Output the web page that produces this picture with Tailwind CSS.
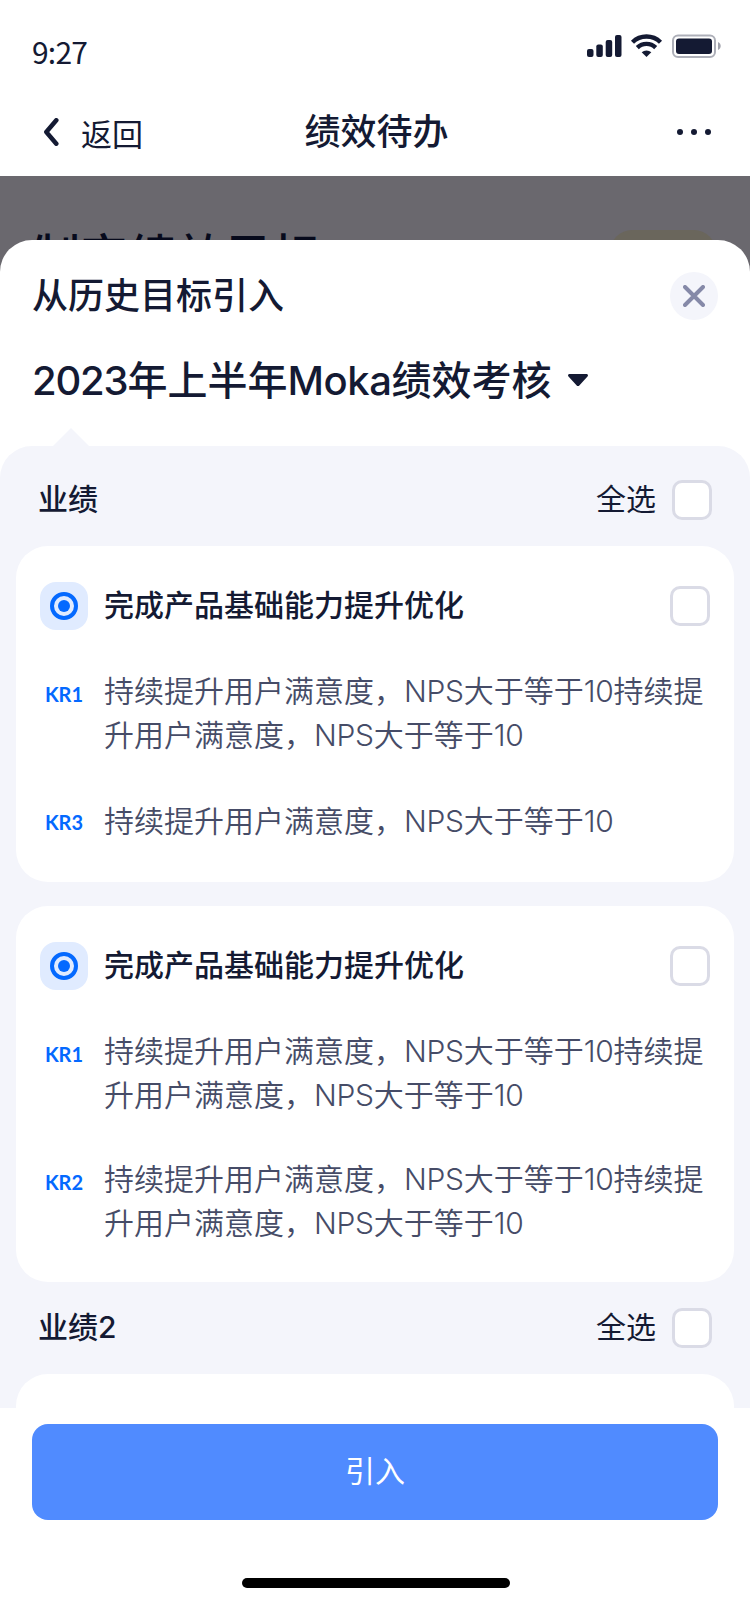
<!DOCTYPE html>
<html lang="zh-CN">
<head>
  <meta charset="UTF-8">
  <meta name="viewport" content="width=device-width, initial-scale=1.0">
  <title>绩效待办</title>
  <script src="https://cdn.jsdelivr.net/npm/@tailwindcss/browser@4"></script>
</head>
<body class="bg-white">
<div class="w-[750px] h-[1604px] overflow-hidden flex flex-col bg-white text-[#141a33] font-['Noto_Sans_CJK_SC',sans-serif]">
  <!-- Status bar -->
  <header class="h-[176px] shrink-0">
    <div class="h-[88px] flex justify-between pl-8 pr-[29px]">
      <span class="text-[30px] leading-[44px] pt-[29px] tracking-[-0.8px]">9:27</span>
      <svg class="w-[134px] h-6 mt-[34px]" viewBox="0 0 134 24" fill="none">
        <rect x="0" y="15" width="6.5" height="8" rx="2" fill="#141a33"/>
        <rect x="9.3" y="10.5" width="6.5" height="12.5" rx="2" fill="#141a33"/>
        <rect x="18.7" y="6" width="6.5" height="17" rx="2" fill="#141a33"/>
        <rect x="28" y="1" width="6.5" height="22" rx="2" fill="#141a33"/>
        <path d="M45.5 8.200a20 20 0 0 1 28 0M50.300 13.600a13.200 13.200 0 0 1 18.400 0" stroke="#141a33" stroke-width="4.400"/>
        <path d="M54.700 18.300a7 7 0 0 1 9.600 0L59.500 23z" fill="#141a33"/>
        <rect x="86" y="1.500" width="42" height="21.500" rx="5" stroke="#141a33" stroke-opacity=".35" stroke-width="2"/>
        <rect x="89" y="4.500" width="36" height="15.500" rx="3" fill="#141a33"/>
        <path d="M131 8v8c1.600-.7 2.700-2.200 2.700-4s-1.100-3.300-2.700-4z" fill="#141a33" fill-opacity=".4"/>
      </svg>
    </div>
    <!-- Nav bar -->
    <div class="h-[88px] grid grid-cols-3 items-center pl-11 pr-[41px]">
      <div class="flex items-center gap-[22px]">
        <svg class="w-[15px] h-7" viewBox="0 0 15 28" fill="none" stroke="#141a33" stroke-width="4.500" stroke-linecap="round" stroke-linejoin="round"><path d="M12.300 2.300 2.300 14l10 11.700"/></svg>
        <span class="text-[31px] leading-[44px] pt-[2px]">返回</span>
      </div>
      <h1 class="text-center text-[36px] leading-[52px] pb-[6px] font-medium">绩效待办</h1>
      <svg class="w-[34px] h-[6px] justify-self-end -mr-[2px]" viewBox="0 0 34 6" fill="#141a33"><circle cx="3" cy="3" r="3"/><circle cx="17" cy="3" r="3"/><circle cx="31" cy="3" r="3"/></svg>
    </div>
  </header>

  <!-- Dimmed page behind the sheet -->
  <div class="relative h-[1428px] bg-[#6a686e]">
    <div class="flex justify-between pl-8 pr-[34px] pt-[41px]">
      <h2 class="text-[48px] leading-[72px] font-medium text-[#070a1c]">制定绩效目标</h2>
      <span class="w-[106px] h-11 mt-[13px] rounded-[22px] bg-[#6a665c]"></span>
    </div>

    <!-- Bottom sheet -->
    <section class="absolute inset-x-0 top-16 bottom-0 bg-white rounded-t-[32px] flex flex-col">
      <div class="flex items-center justify-between h-20 px-8 pt-8">
        <h2 class="text-[36px] leading-[48px] pb-[6px] font-medium">从历史目标引入</h2>
        <button class="size-12 rounded-full bg-[#f4f5fb] flex items-center justify-center">
          <svg class="size-[22px]" viewBox="0 0 22 22" stroke="#8589a8" stroke-width="4" stroke-linecap="round"><path d="M2 2l18 18M20 2 2 20"/></svg>
        </button>
      </div>
      <div class="flex items-center px-8 mt-8 h-14 gap-4">
        <h3 class="text-[40px] leading-[56px] pb-[5px] font-medium whitespace-nowrap"><span class="font-['Inter'] leading-none tracking-[-0.03em]">2023</span>年上半年<span class="font-['Inter'] leading-none tracking-[-0.01em]">Moka</span>绩效考核</h3>
        <svg class="w-5 h-3" viewBox="0 0 20 12" fill="#141a33"><path d="M1.500 0h17c1.300 0 2 1.500 1 2.500l-8.200 9a1.700 1.700 0 0 1-2.600 0L.5 2.500C-.5 1.500.2 0 1.500 0z"/></svg>
      </div>
      <svg class="w-[36px] h-[18px] ml-[53px] mt-[20px]" viewBox="0 0 36 18" fill="#f4f5fb"><path d="M0 18 18 0l18 18z"/></svg>

      <div class="h-[962px] shrink-0 overflow-hidden bg-[#f4f5fb] rounded-t-[32px]">
        <div class="h-[100px] flex items-center pt-[8px] px-[38px] gap-4">
          <h4 class="flex-1 text-[30px] leading-[44px] pb-[6px] font-medium">业绩</h4>
          <span class="text-[30px] leading-[44px] pb-[6px]">全选</span>
          <span class="size-10 rounded-[10px] border-3 border-[#dadbe6] bg-white"></span>
        </div>

        <div class="mx-4 h-[336px] rounded-[32px] bg-white px-6 pt-9">
          <div class="flex items-center h-12 gap-4">
            <span class="size-12 rounded-2xl bg-[#e0ebff] flex items-center justify-center">
              <svg class="size-7" viewBox="0 0 28 28" fill="none"><circle cx="14" cy="14" r="12" stroke="#0469ff" stroke-width="4"/><circle cx="14" cy="14" r="6" fill="#0469ff"/></svg>
            </span>
            <h5 class="flex-1 text-[30px] leading-[44px] pb-[6px] font-medium">完成产品基础能力提升优化</h5>
            <span class="size-10 rounded-[10px] border-3 border-[#dadbe6] bg-white"></span>
          </div>
          <div class="flex gap-4 mt-10 h-[88px] text-[30px] leading-[44px] font-[350] text-[#464c67]">
            <span class="w-12 text-center font-['Lato'] font-bold text-[20px] leading-[48px] text-[#0469ff]">KR1</span>
            <p class="-mt-[3px] whitespace-nowrap">持续提升用户满意度，<span class="font-['Inter'] font-light leading-none tracking-[-0.01em]">NPS</span>大于等于<span class="font-['Inter'] font-light leading-none tracking-[-0.01em]">10</span>持续提<br>升用户满意度，<span class="font-['Inter'] font-light leading-none tracking-[-0.01em]">NPS</span>大于等于<span class="font-['Inter'] font-light leading-none tracking-[-0.01em]">10</span></p>
          </div>
          <div class="flex gap-4 mt-10 h-12 text-[30px] leading-[44px] font-[350] text-[#464c67]">
            <span class="w-12 text-center font-['Lato'] font-bold text-[20px] leading-[48px] text-[#0469ff]">KR3</span>
            <p class="-mt-px whitespace-nowrap">持续提升用户满意度，<span class="font-['Inter'] font-light leading-none tracking-[-0.01em]">NPS</span>大于等于<span class="font-['Inter'] font-light leading-none tracking-[-0.01em]">10</span></p>
          </div>
        </div>

        <div class="mx-4 mt-6 h-[376px] rounded-[32px] bg-white px-6 pt-9">
          <div class="flex items-center h-12 gap-4">
            <span class="size-12 rounded-2xl bg-[#e0ebff] flex items-center justify-center">
              <svg class="size-7" viewBox="0 0 28 28" fill="none"><circle cx="14" cy="14" r="12" stroke="#0469ff" stroke-width="4"/><circle cx="14" cy="14" r="6" fill="#0469ff"/></svg>
            </span>
            <h5 class="flex-1 text-[30px] leading-[44px] pb-[6px] font-medium">完成产品基础能力提升优化</h5>
            <span class="size-10 rounded-[10px] border-3 border-[#dadbe6] bg-white"></span>
          </div>
          <div class="flex gap-4 mt-10 h-[88px] text-[30px] leading-[44px] font-[350] text-[#464c67]">
            <span class="w-12 text-center font-['Lato'] font-bold text-[20px] leading-[48px] text-[#0469ff]">KR1</span>
            <p class="-mt-[3px] whitespace-nowrap">持续提升用户满意度，<span class="font-['Inter'] font-light leading-none tracking-[-0.01em]">NPS</span>大于等于<span class="font-['Inter'] font-light leading-none tracking-[-0.01em]">10</span>持续提<br>升用户满意度，<span class="font-['Inter'] font-light leading-none tracking-[-0.01em]">NPS</span>大于等于<span class="font-['Inter'] font-light leading-none tracking-[-0.01em]">10</span></p>
          </div>
          <div class="flex gap-4 mt-10 h-[88px] text-[30px] leading-[44px] font-[350] text-[#464c67]">
            <span class="w-12 text-center font-['Lato'] font-bold text-[20px] leading-[48px] text-[#0469ff]">KR2</span>
            <p class="-mt-[3px] whitespace-nowrap">持续提升用户满意度，<span class="font-['Inter'] font-light leading-none tracking-[-0.01em]">NPS</span>大于等于<span class="font-['Inter'] font-light leading-none tracking-[-0.01em]">10</span>持续提<br>升用户满意度，<span class="font-['Inter'] font-light leading-none tracking-[-0.01em]">NPS</span>大于等于<span class="font-['Inter'] font-light leading-none tracking-[-0.01em]">10</span></p>
          </div>
        </div>

        <div class="h-[92px] flex items-center px-[38px] gap-4">
          <h4 class="flex-1 text-[30px] leading-[44px] pb-[6px] font-medium">业绩<span class="font-['Inter'] leading-none">2</span></h4>
          <span class="text-[30px] leading-[44px] pb-[6px]">全选</span>
          <span class="size-10 rounded-[10px] border-3 border-[#dadbe6] bg-white"></span>
        </div>
        <div class="mx-4 h-40 rounded-[32px] bg-white"></div>
      </div>

      <footer class="flex flex-col items-center px-8 pt-4 bg-white">
        <button class="w-full h-24 pb-[6px] rounded-2xl bg-[#508bff] text-white text-[30px] leading-[44px]">引入</button>
        <div class="w-[268px] h-[10px] ml-[2px] mt-[58px] rounded-full bg-black"></div>
      </footer>
    </section>
  </div>
</div>
</body>
</html>
